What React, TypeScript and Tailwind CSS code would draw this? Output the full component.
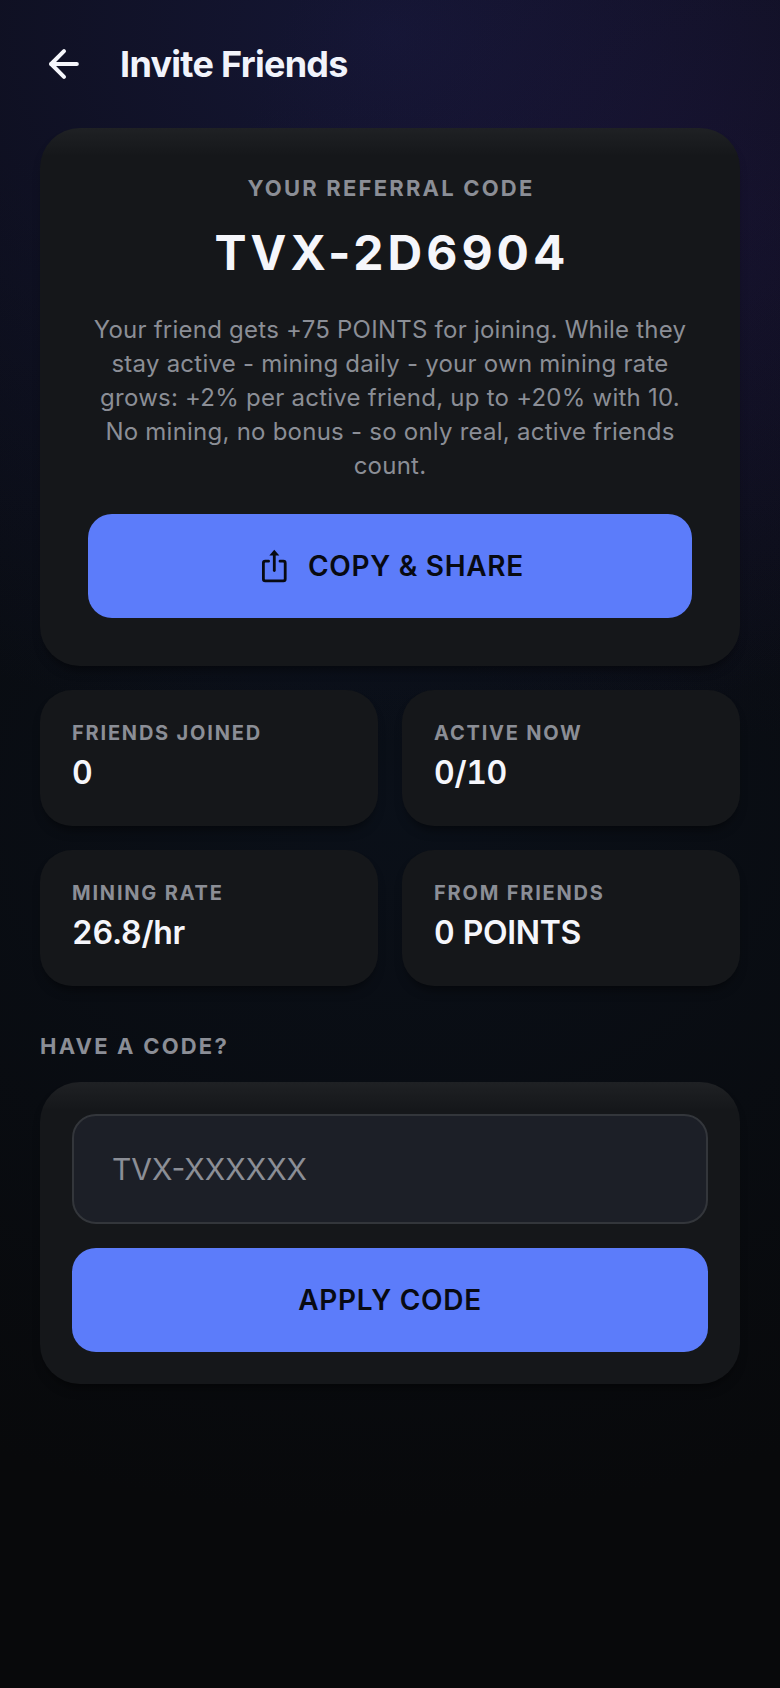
import React, { useState } from 'react';
import { ArrowLeft } from 'lucide-react';

interface Stat {
  label: string;
  value: string;
}

const referralCode = 'TVX-2D6904';

const stats: Stat[] = [
  { label: 'FRIENDS JOINED', value: '0' },
  { label: 'ACTIVE NOW', value: '0/10' },
  { label: 'MINING RATE', value: '26.8/hr' },
  { label: 'FROM FRIENDS', value: '0 POINTS' },
];

const ShareIcon: React.FC = () => (
  <svg className="size-9" viewBox="0 0 36 36" fill="none" stroke="currentColor" strokeWidth="2.8" aria-hidden="true">
    <path strokeLinejoin="round" strokeLinecap="round" d="M12.6 13.2H9.2a1.8 1.8 0 0 0-1.8 1.8v16a1.8 1.8 0 0 0 1.8 1.8h18.2a1.8 1.8 0 0 0 1.8-1.8V15a1.8 1.8 0 0 0-1.8-1.8H24" />
    <path strokeLinecap="round" d="M18.3 6v16.6" />
    <path fill="currentColor" stroke="none" d="M18.3 1.8l5 5.6h-10z" />
  </svg>
);

const StatCard: React.FC<Stat> = ({ label, value }) => (
  <div className="rounded-[32px] bg-[#15171a] p-8 shadow-[0_8px_12px_-6px_rgba(0,0,0,0.6)]">
    <dt className="text-[20px] leading-[22px] font-bold tracking-[0.09em] text-[#8b8e96]">{label}</dt>
    <dd className="mt-2 text-[32px] leading-[42px] font-semibold tracking-[-0.01em] tabular-nums text-[#f5f6fb]">{value}</dd>
  </div>
);

const App: React.FC = () => {
  const [code, setCode] = useState('');

  const handleShare = () => {
    navigator.clipboard?.writeText(referralCode);
  };

  return (
    <div className="min-h-screen bg-[#08090b] bg-[radial-gradient(ellipse_60%_30%_at_90%_14%,rgba(50,25,90,0.2),transparent),radial-gradient(ellipse_120%_42%_at_50%_2%,rgba(38,40,110,0.42),transparent),radial-gradient(ellipse_120%_42%_at_50%_48%,rgba(12,22,38,0.5),transparent)] px-10 pb-10 font-['Inter',sans-serif]">
      <header className="flex h-32 items-center gap-8">
        <button type="button" aria-label="Back" className="flex size-12 items-center justify-center text-[#f5f6fb]">
          <ArrowLeft size={44} strokeWidth={2.2} />
        </button>
        <h1 className="text-[36px] leading-[44px] font-bold tracking-[-0.02em] text-[#f1f3fb]">Invite Friends</h1>
      </header>

      <main>
        <section className="rounded-[40px] bg-[#15171a] bg-[linear-gradient(to_bottom,#1f2124,#15171a_28px)] p-12 text-center shadow-[0_8px_12px_-6px_rgba(0,0,0,0.6)]">
          <h2 className="pl-0.5 text-[22px] leading-[24px] font-bold tracking-[0.1em] text-[#8b8e96]">YOUR REFERRAL CODE</h2>
          <p className="mt-6 pl-1 text-[48px] leading-[58px] font-bold tracking-[4px] text-[#f5f6fb]">{referralCode}</p>
          <p className="my-[31px] text-[24px] leading-[34px] tracking-[0.01em] text-[#8b8e96]">
            Your friend gets +75 POINTS for joining. While they stay active - mining daily - your own mining rate
            grows: +2% per active friend, up to +20% with 10. No mining, no bonus - so only real, active friends count.
          </p>
          <button
            type="button"
            onClick={handleShare}
            className="flex h-[104px] w-full items-center justify-center gap-4 rounded-3xl bg-[#5c7cfa] text-[28px] leading-[36px] font-semibold tracking-wide text-[#080a12]"
          >
            <ShareIcon />
            COPY &amp; SHARE
          </button>
        </section>

        <dl className="mt-6 grid grid-cols-2 gap-6">
          {stats.map((stat) => (
            <StatCard key={stat.label} label={stat.label} value={stat.value} />
          ))}
        </dl>

        <h2 className="mt-12 text-[22px] leading-[24px] font-bold tracking-[0.1em] text-[#8b8e96]">
          <label htmlFor="friend-code">HAVE A CODE?</label>
        </h2>
        <form
          onSubmit={(e) => e.preventDefault()}
          className="mt-6 flex flex-col gap-6 rounded-[40px] bg-[#15171a] bg-[linear-gradient(to_bottom,#1f2124,#15171a_28px)] p-8 shadow-[0_8px_12px_-6px_rgba(0,0,0,0.6)]"
        >
          <input
            id="friend-code"
            type="text"
            value={code}
            onChange={(e) => setCode(e.target.value)}
            placeholder="TVX-XXXXXX"
            className="h-[110px] w-full rounded-3xl border-2 border-[#33363b] bg-[#1c1f27] px-[38px] text-[30px] text-[#f5f6fb] outline-none placeholder:text-[#8b8e96]"
          />
          <button
            type="submit"
            className="h-[104px] w-full rounded-3xl bg-[#5c7cfa] text-[28px] leading-[36px] font-semibold tracking-wide text-[#080a12]"
          >
            APPLY CODE
          </button>
        </form>
      </main>
    </div>
  );
};

export default App;
